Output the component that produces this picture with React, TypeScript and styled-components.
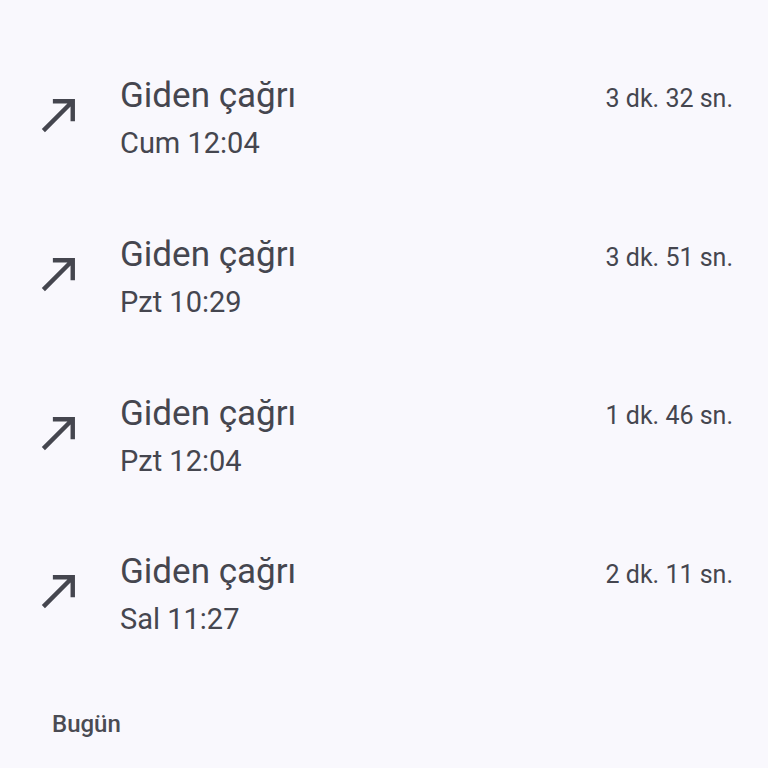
import React from "react";
import styled, { createGlobalStyle } from "styled-components";

const GlobalStyle = createGlobalStyle`
  html, body {
    margin: 0;
    padding: 0;
    background: #f9f8fd;
  }
  body {
    font-family: Roboto, "Noto Sans", sans-serif;
    color: #45464f;
  }
`;

const Page = styled.div`
  width: 768px;
  height: 768px;
  overflow: hidden;
  background: #f9f8fd;
  padding-top: 43px;
  box-sizing: border-box;
`;

const List = styled.ul`
  list-style: none;
  margin: 0;
  padding: 0;
`;

const Row = styled.li`
  height: 158.67px;
  display: flex;
  align-items: center;
  padding: 0 35px 0 33px;
  box-sizing: border-box;
`;

const IconBox = styled.div`
  width: 53px;
  height: 53px;
  flex: none;
  color: #45464f;
  margin-top: -15px;

  svg {
    display: block;
    width: 100%;
    height: 100%;
  }
`;

const Texts = styled.div`
  flex: 1;
  margin-left: 34px;
  display: flex;
  flex-direction: column;
`;

const Title = styled.div`
  font-size: 35px;
  line-height: 42px;
  color: #45464f;
`;

const Sub = styled.div`
  font-size: 29px;
  line-height: 52px;
  color: #45464f;
`;

const Duration = styled.div`
  align-self: flex-start;
  margin-top: 40px;
  font-size: 25px;
  line-height: 32px;
  color: #45464f;
`;

const SectionHeader = styled.div`
  padding: 28px 0 0 52px;
  font-size: 24px;
  line-height: 36px;
  font-weight: 500;
  color: #4a4b53;
`;

const OutgoingIcon = () => (
  <svg viewBox="0 0 24 24" aria-hidden="true">
    <path fill="currentColor" d="M9 5v2h6.59L4 18.59 5.41 20 17 8.41V15h2V5z" />
  </svg>
);

type Call = { label: string; time: string; duration: string };

const calls: Call[] = [
  { label: "Giden çağrı", time: "Cum 12:04", duration: "3 dk. 32 sn." },
  { label: "Giden çağrı", time: "Pzt 10:29", duration: "3 dk. 51 sn." },
  { label: "Giden çağrı", time: "Pzt 12:04", duration: "1 dk. 46 sn." },
  { label: "Giden çağrı", time: "Sal 11:27", duration: "2 dk. 11 sn." },
];

export default function App() {
  return (
    <Page>
      <GlobalStyle />
      <List>
        {calls.map((c, i) => (
          <Row key={i}>
            <IconBox>
              <OutgoingIcon />
            </IconBox>
            <Texts>
              <Title>{c.label}</Title>
              <Sub>{c.time}</Sub>
            </Texts>
            <Duration>{c.duration}</Duration>
          </Row>
        ))}
      </List>
      <SectionHeader>Bugün</SectionHeader>
    </Page>
  );
}
